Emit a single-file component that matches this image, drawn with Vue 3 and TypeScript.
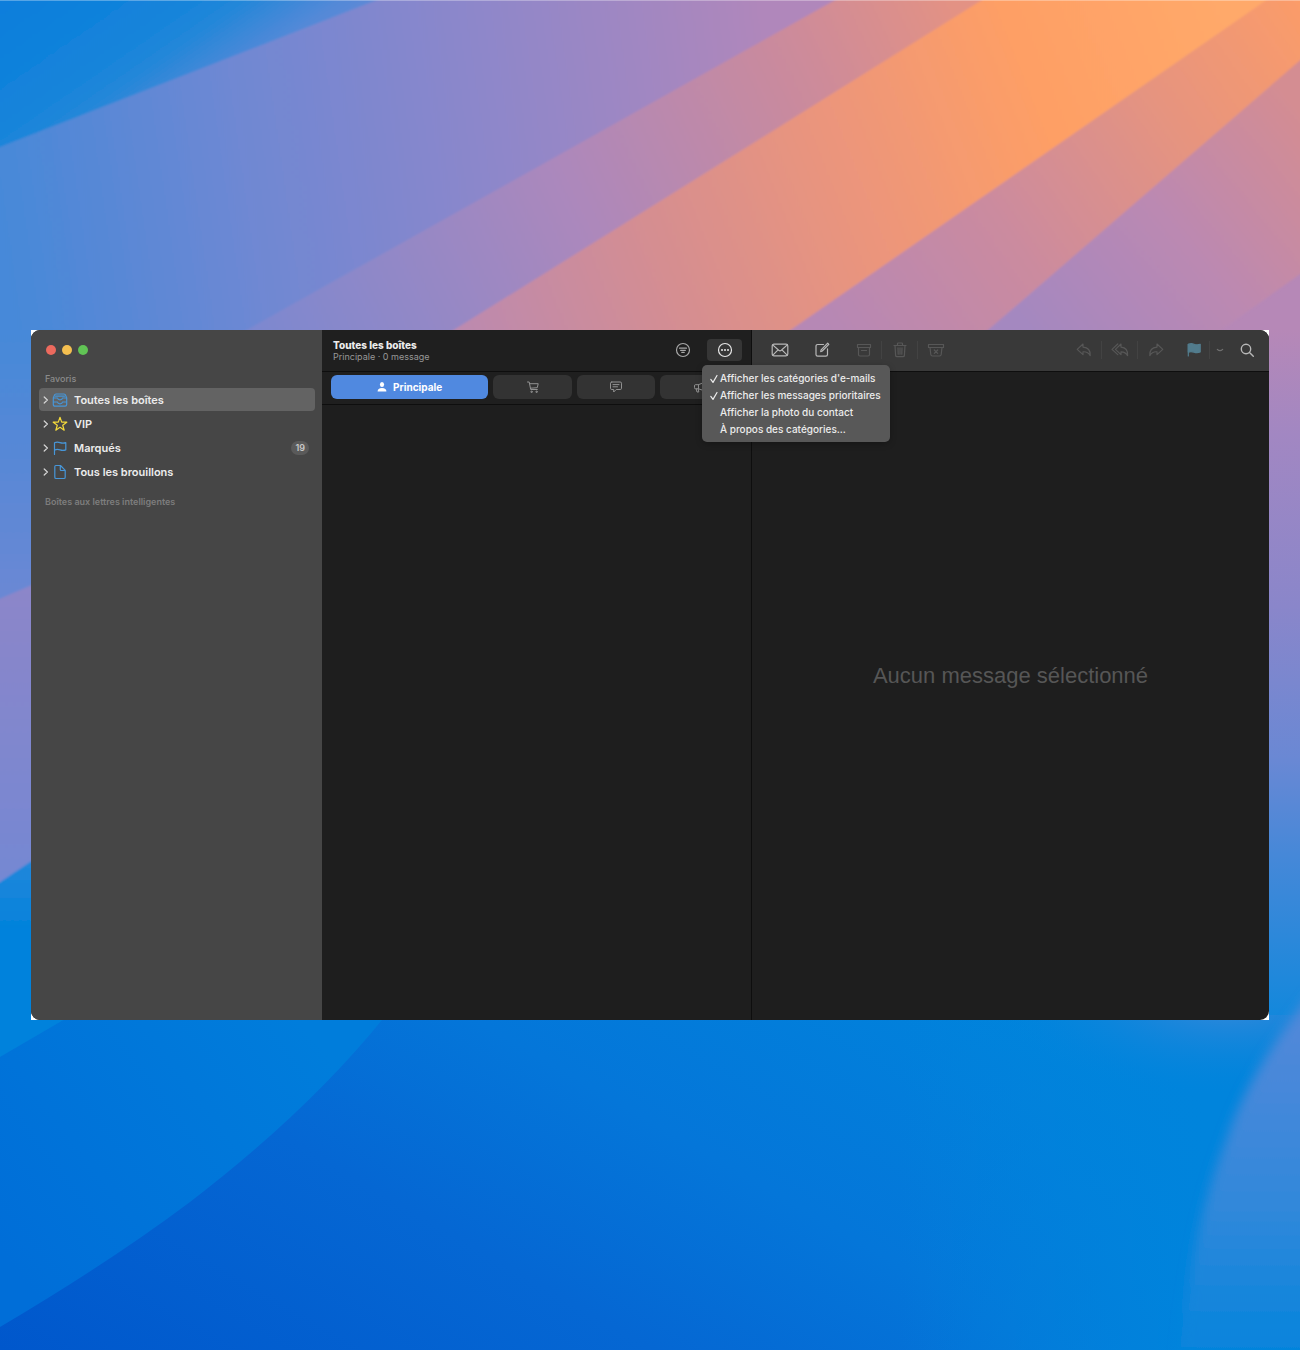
<script setup lang="ts">
import { ref } from 'vue'

interface Mailbox {
  label: string
  icon: 'tray' | 'star' | 'flag' | 'doc'
  count?: number
}

const mailboxes: Mailbox[] = [
  { label: 'Toutes les boîtes', icon: 'tray' },
  { label: 'VIP', icon: 'star' },
  { label: 'Marqués', icon: 'flag', count: 19 },
  { label: 'Tous les brouillons', icon: 'doc' },
]
const selected = ref('Toutes les boîtes')

const menuItems = ref([
  { label: "Afficher les catégories d'e-mails", checked: true },
  { label: 'Afficher les messages prioritaires', checked: true },
  { label: 'Afficher la photo du contact', checked: false },
  { label: 'À propos des catégories...', checked: false },
])
const menuOpen = ref(true)
</script>

<template>
  <div class="desktop">
    <svg class="wallpaper" viewBox="0 0 1300 1350" preserveAspectRatio="none" aria-hidden="true">
      <defs>
        <linearGradient id="base" gradientUnits="userSpaceOnUse" x1="0" y1="330" x2="0" y2="1020">
          <stop offset="0" stop-color="#b688b7" /><stop offset=".15" stop-color="#a287c2" />
          <stop offset=".4" stop-color="#8a86ca" /><stop offset=".62" stop-color="#6a88d4" />
          <stop offset=".76" stop-color="#4688d8" /><stop offset="1" stop-color="#1288dc" />
        </linearGradient>
        <linearGradient id="corner" gradientUnits="userSpaceOnUse" x1="0" y1="0" x2="122" y2="177">
          <stop offset="0" stop-color="#087edc" /><stop offset=".5" stop-color="#1684da" />
          <stop offset=".64" stop-color="#2287d9" /><stop offset=".88" stop-color="#5089d8" /><stop offset="1" stop-color="#6089d6" />
        </linearGradient>
        <linearGradient id="lav" gradientUnits="userSpaceOnUse" x1="0" y1="240" x2="780" y2="130">
          <stop offset="0" stop-color="#4689d9" /><stop offset=".32" stop-color="#6f88d3" />
          <stop offset=".62" stop-color="#8c87cb" /><stop offset="1" stop-color="#b087bb" />
        </linearGradient>
        <linearGradient id="pink" gradientUnits="userSpaceOnUse" x1="250" y1="330" x2="950" y2="0">
          <stop offset="0" stop-color="#7c88d0" /><stop offset=".45" stop-color="#ac88bc" />
          <stop offset=".8" stop-color="#cd8b9a" /><stop offset="1" stop-color="#e39284" />
        </linearGradient>
        <linearGradient id="orange" gradientUnits="userSpaceOnUse" x1="470" y1="330" x2="1230" y2="30">
          <stop offset="0" stop-color="#bd8aae" /><stop offset=".25" stop-color="#d58e91" />
          <stop offset=".52" stop-color="#ed967a" /><stop offset=".75" stop-color="#fe9f65" /><stop offset="1" stop-color="#ffa96a" />
        </linearGradient>
        <linearGradient id="coral" gradientUnits="userSpaceOnUse" x1="830" y1="330" x2="1300" y2="0">
          <stop offset="0" stop-color="#b688b5" /><stop offset=".35" stop-color="#cb8b9f" />
          <stop offset=".7" stop-color="#e6947f" /><stop offset="1" stop-color="#fb9c69" />
        </linearGradient>
        <linearGradient id="mauve" gradientUnits="userSpaceOnUse" x1="1030" y1="330" x2="1300" y2="110">
          <stop offset="0" stop-color="#a488c0" /><stop offset=".5" stop-color="#bb89b2" /><stop offset="1" stop-color="#d48d92" />
        </linearGradient>
        <linearGradient id="leftblue" gradientUnits="userSpaceOnUse" x1="0" y1="330" x2="0" y2="600">
          <stop offset="0" stop-color="#4689d9" /><stop offset="1" stop-color="#6b88d4" />
        </linearGradient>
        <linearGradient id="leftpurple" gradientUnits="userSpaceOnUse" x1="0" y1="590" x2="0" y2="880">
          <stop offset="0" stop-color="#8c86c9" /><stop offset="1" stop-color="#7588d3" />
        </linearGradient>
        <linearGradient id="leftdeep" gradientUnits="userSpaceOnUse" x1="0" y1="865" x2="0" y2="935">
          <stop offset="0" stop-color="#2187da" /><stop offset="1" stop-color="#0082dc" />
        </linearGradient>
        <linearGradient id="sea" gradientUnits="userSpaceOnUse" x1="50" y1="1380" x2="460" y2="670">
          <stop offset="0" stop-color="#0057cc" /><stop offset=".4" stop-color="#0567d3" />
          <stop offset=".64" stop-color="#0476d9" /><stop offset="1" stop-color="#0084dc" />
        </linearGradient>
        <linearGradient id="seaRight" gradientUnits="userSpaceOnUse" x1="900" y1="0" x2="1210" y2="0">
          <stop offset="0" stop-color="#0084dc" stop-opacity="0" /><stop offset="1" stop-color="#0084dc" />
        </linearGradient>
        <linearGradient id="shelf" gradientUnits="userSpaceOnUse" x1="0" y1="1250" x2="300" y2="1020">
          <stop offset="0" stop-color="#006ed8" /><stop offset="1" stop-color="#007ddb" />
        </linearGradient>
        <linearGradient id="ray" gradientUnits="userSpaceOnUse" x1="0" y1="1040" x2="0" y2="1350">
          <stop offset="0" stop-color="#4f88d9" /><stop offset=".55" stop-color="#3088da" /><stop offset="1" stop-color="#0684dc" />
        </linearGradient>
        <radialGradient id="glow" gradientUnits="userSpaceOnUse" cx="1230" cy="1000" r="240" gradientTransform="matrix(1 0 0 .4 0 600)">
          <stop offset="0" stop-color="#3a89da" /><stop offset="1" stop-color="#0084dc" stop-opacity="0" />
        </radialGradient>
        <filter id="soft" x="-20%" y="-20%" width="140%" height="140%"><feGaussianBlur stdDeviation="6" /></filter>
        <filter id="edge"><feGaussianBlur stdDeviation="1" /></filter>
      </defs>
      <rect width="1300" height="1350" fill="url(#base)" />
      <g filter="url(#edge)">
        <path d="M-10-10H860L230 340H-10z" fill="url(#lav)" />
        <path d="M-10-10H400L377 0 0 147-10 151z" fill="url(#corner)" />
        <path d="M853-10H1000L430 345H220z" fill="url(#pink)" />
        <path d="M998-10H1282L770 345H430z" fill="url(#orange)" />
        <path d="M1281-10H1320V48L970 345H769z" fill="url(#coral)" />
        <path d="M-10 330H60V574L-10 604z" fill="url(#leftblue)" />
        <path d="M-10 603L60 573V842L-10 889z" fill="url(#leftpurple)" />
        <path d="M-10 889L60 842V1050H-10z" fill="url(#leftdeep)" />
        <path d="M1320 43V260L1200 345H971z" fill="url(#mauve)" />
      </g>
      <path d="M0 1015H1300V1350H0z" fill="url(#sea)" />
      <path d="M600 1015H1300V1350H600z" fill="url(#seaRight)" />
      <path d="M900 1015H1300V1100H900z" fill="url(#glow)" />
      <path d="M0 1015H386Q310 1110 190 1202Q110 1262 0 1327z" fill="url(#shelf)" />
      <path d="M0 1015H72L0 1057z" fill="#0082dc" />
      <path d="M1330 970Q1250 1065 1226 1140Q1190 1230 1178 1370H1330z" fill="url(#ray)" filter="url(#soft)" />
      <path d="M0 0H1300V1H0z" fill="#fff" opacity=".3" />
    </svg>

    <div class="frame">
      <main class="window">
        <aside class="sidebar">
          <div class="lights">
            <button class="light red" aria-label="Fermer"></button>
            <button class="light yellow" aria-label="Réduire"></button>
            <button class="light green" aria-label="Agrandir"></button>
          </div>
          <h2 class="section">Favoris</h2>
          <nav class="boxes">
            <button
              v-for="box in mailboxes"
              :key="box.label"
              class="box"
              :class="{ active: box.label === selected }"
              @click="selected = box.label"
            >
              <svg class="chev" viewBox="0 0 6 8"><path d="M1.2 1l3.2 3-3.2 3" /></svg>
              <svg class="boxicon" :class="box.icon" viewBox="0 0 16 16">
                <g v-if="box.icon === 'tray'">
                  <path d="M1.300 6L2.400 3.200Q2.800 2 4 2h8q1.200 0 1.600 1.200L14.700 6v6.500q0 1.700-1.700 1.700H3q-1.700 0-1.700-1.700z" />
                  <path d="M1.500 6h4q.3 1.800 2.500 1.800T10.500 6h4M1.500 10h4q.3 1.800 2.500 1.800t2.500-1.800h4M3.500 4.100h9" />
                </g>
                <path v-else-if="box.icon === 'star'" d="M8 1.300l1.700 4.800 5.100.1-4.100 3.100 1.500 4.900L8 11.300l-4.200 2.900 1.500-4.900-4.100-3.100 5.100-.1z" />
                <path v-else-if="box.icon === 'flag'" d="M2.500 14.500V2.800Q5 1.600 8 2.600t5.800 0v7.300q-2.800 1-5.800 0t-5.500.3" />
                <path v-else d="M3.800 1.500h4.700l4.700 4.800v6.900q0 1.300-1.300 1.300H4.100q-1.300 0-1.300-1.300V2.800q0-1.300 1-1.300zM8.300 1.700v3.700q0 1.100 1.100 1.100h3.700" />
              </svg>
              <span class="boxname">{{ box.label }}</span>
              <span v-if="box.count" class="badge">{{ box.count }}</span>
            </button>
          </nav>
          <h2 class="section smart">Boîtes aux lettres intelligentes</h2>
        </aside>

        <section class="list">
          <header class="bar">
            <div class="heading">
              <h1>Toutes les boîtes</h1>
              <p>Principale · 0 message</p>
            </div>
            <button class="tool" aria-label="Filtrer">
              <svg viewBox="0 0 16 16"><circle cx="8" cy="8" r="6.500" /><path d="M4.500 6.200h7M5.600 8.300h4.800M6.800 10.400h2.400" /></svg>
            </button>
            <div class="more">
              <button class="tool pressed" aria-label="Options" :aria-expanded="menuOpen" @click="menuOpen = !menuOpen">
                <svg viewBox="0 0 16 16"><circle cx="8" cy="8" r="6.500" /><path class="dots" d="M5 8h.01M8 8h.01M11 8h.01" /></svg>
              </button>
              <div v-if="menuOpen" class="menu" role="menu">
                <button v-for="item in menuItems" :key="item.label" class="item" role="menuitem" @click="item.checked = !item.checked">
                  <svg class="check" viewBox="0 0 10 10"><path v-if="item.checked" d="M1.800 5.400l2.200 3L8 1.500" /></svg>
                  <span>{{ item.label }}</span>
                </button>
              </div>
            </div>
          </header>
          <div class="tabs">
            <button class="tab main">
              <svg class="person" viewBox="0 0 10 10"><ellipse cx="5" cy="2.600" rx="2.100" ry="2.500" /><path d="M.6 9.500q0-3.500 4.400-3.500t4.400 3.500z" /></svg>
              <span>Principale</span>
            </button>
            <button class="tab" aria-label="Transactions">
              <svg viewBox="0 0 14 14"><path d="M1.500 2h1.700l1.500 7.500h6.600M3.500 3.700h8.700l-.9 4-6.800.5" /><circle cx="5.500" cy="11.800" r=".7" /><circle cx="10.500" cy="11.800" r=".7" /></svg>
            </button>
            <button class="tab" aria-label="Actualités">
              <svg viewBox="0 0 14 14"><path d="M2.800 2h8.400q1.300 0 1.300 1.200v5.100q0 1.200-1.300 1.200H7.200L4.700 12V9.500H2.800q-1.300 0-1.300-1.200V3.200Q1.500 2 2.800 2zM4 4.600h6M4 6.800h4.500" /></svg>
            </button>
            <button class="tab" aria-label="Promotions">
              <svg viewBox="0 0 14 14"><path d="M1.500 5.500q0-.8.8-.8h3.200L12 2v9L5.500 8.800H2.300q-.8 0-.8-.8zM5.500 4.700v4.100M3.200 8.800l.8 3.200h1.800L5.200 8.800" /></svg>
            </button>
          </div>
        </section>

        <section class="viewer">
          <header class="actions">
            <button class="act" aria-label="Relever">
              <svg class="wide" viewBox="0 0 18 16"><rect x="1.200" y="2.200" width="15.600" height="11.600" rx="1.800" /><path d="M1.700 2.900l6 5.400q1.300 1.100 2.600 0l6-5.400M1.800 13.200l5-5M16.200 13.200l-5-5" /></svg>
            </button>
            <button class="act gap" aria-label="Nouveau message">
              <svg viewBox="0 0 16 16"><path d="M9.500 2.500H3.700q-1.700 0-1.700 1.700v8.300q0 1.700 1.700 1.700h8.100q1.700 0 1.700-1.700V6.800M6.700 9.600l.4-1.700 6.600-6.700 1.100 1.200-6.500 6.600z" /></svg>
            </button>
            <button class="act gap dim" aria-label="Archiver">
              <svg viewBox="0 0 16 16"><path d="M1.500 2.500h13v3h-13zM2.500 5.500v7q0 1.500 1.500 1.500h8q1.500 0 1.500-1.500v-7M5.500 8.500h5" /></svg>
            </button>
            <i class="sep"></i>
            <button class="act dim" aria-label="Supprimer">
              <svg viewBox="0 0 16 16"><path d="M2 3.500h12M5.500 3.300V1.800q0-.8.8-.8h3.400q.8 0 .8.800v1.500M3 3.500l.6 9.900q.1 1.300 1.400 1.300h6q1.300 0 1.400-1.300L13 3.500M6 5.800l.2 6.400M8 5.800v6.400M10 5.800l-.2 6.400" /></svg>
            </button>
            <i class="sep"></i>
            <button class="act dim" aria-label="Indésirable">
              <svg class="wide" viewBox="0 0 18 16"><path d="M1.500 2.500h15v3h-15zM3 5.500l.8 7q.2 1.500 1.700 1.500h7q1.500 0 1.700-1.500l.8-7M7.300 8l3.400 3.400M10.700 8l-3.400 3.400" /></svg>
            </button>
            <span class="spacer"></span>
            <button class="act dim" aria-label="Répondre">
              <svg viewBox="0 0 16 16"><path d="M7 2L1.200 7.400 7 12.600V9.800q4.800-.4 7.200 3.800.5-8-7.200-8.500z" /></svg>
            </button>
            <i class="sep"></i>
            <button class="act dim" aria-label="Répondre à tous">
              <svg class="wide" viewBox="0 0 18 16"><path d="M10 2L4.400 7.400 10 12.600V9.800q4.300-.2 6.600 3.800.5-8-6.600-8.500zM6.800 2L1 7.400l5.800 5.200" /></svg>
            </button>
            <i class="sep"></i>
            <button class="act dim" aria-label="Réexpédier">
              <svg viewBox="0 0 16 16"><path d="M9 2l5.800 5.400L9 12.600V9.800q-4.800-.4-7.200 3.800Q1.300 5.600 9 5.100z" /></svg>
            </button>
            <button class="act flagbtn" aria-label="Marquer">
              <svg viewBox="0 0 16 16"><path class="cloth" d="M2.300 10.100V2.400Q5 1 8 2.200t6.200.1v7.600q-3 1.300-6.200.2t-5.700 0z" /><path d="M2.300 14V2.400" /></svg>
            </button>
            <i class="sep"></i>
            <button class="act choose" aria-label="Choisir une couleur">
              <svg viewBox="0 0 16 16"><path d="M5.300 7.300Q8 10 10.700 7.300" /></svg>
            </button>
            <button class="act search" aria-label="Rechercher">
              <svg viewBox="0 0 16 16"><circle cx="7" cy="7" r="4.700" /><path d="M10.500 10.500l3.800 3.800" /></svg>
            </button>
          </header>
          <div class="empty"><p>Aucun message sélectionné</p></div>
        </section>
      </main>
    </div>
  </div>
</template>

<style>
body {
  margin: 0;
}
</style>

<style scoped>
.desktop {
  position: relative;
  box-sizing: border-box;
  min-height: 100vh;
  padding: 31px;
  display: flex;
  align-items: center;
  overflow: hidden;
  font-family: Inter, "Liberation Sans", sans-serif;
  color: #ececec;
}
.wallpaper {
  position: absolute;
  inset: 0;
  width: 100%;
  height: 100%;
}
.frame {
  position: relative;
  flex: 1;
  min-width: 0;
  background: #fff;
}
.window {
  display: flex;
  aspect-ratio: 1238 / 690;
  border-radius: 9px;
  overflow: hidden;
  background: #1e1e1e;
}
button {
  margin: 0;
  padding: 0;
  border: 0;
  background: none;
  font: inherit;
  color: inherit;
}
svg {
  display: block;
  fill: none;
  stroke: currentColor;
  stroke-width: 1.2;
  stroke-linecap: round;
  stroke-linejoin: round;
}
.wallpaper,
.wallpaper * {
  stroke: none;
}
h1,
h2,
p {
  margin: 0;
}

.sidebar {
  flex: none;
  width: 291px;
  box-sizing: border-box;
  padding: 15px 7px 0 8px;
  background: #464646;
}
.lights {
  display: flex;
  gap: 6px;
  padding-left: 7px;
}
.light {
  width: 10px;
  height: 10px;
  border-radius: 50%;
}
.red {
  background: #ec6a5e;
}
.yellow {
  background: #f4bf50;
}
.green {
  background: #61c455;
}
.section {
  margin-top: 18px;
  padding-left: 6px;
  font-size: 9px;
  line-height: 12px;
  font-weight: 500;
  color: #8b8b8b;
}
.section.smart {
  margin-top: 13px;
  font-weight: 600;
  color: #7d7d7d;
}
.boxes {
  display: flex;
  flex-direction: column;
  gap: 1px;
  margin-top: 3px;
}
.box {
  display: flex;
  align-items: center;
  height: 23px;
  padding: 0 6px 0 4px;
  border-radius: 4px;
  text-align: left;
}
.box.active {
  background: #636363;
}
.chev {
  width: 6px;
  height: 8px;
  color: #d5d5d5;
}
.boxicon {
  width: 16px;
  height: 16px;
  margin: 0 6px 0 3px;
  color: #4796d8;
}
.boxicon.star {
  color: #f2d83b;
}
.boxname {
  flex: 1;
  font-size: 11px;
  line-height: 14px;
  font-weight: 600;
}
.badge {
  padding: 0 4px;
  border-radius: 7px;
  background: #5a5a5a;
  font-size: 9px;
  line-height: 14px;
  font-weight: 600;
  color: #c8c8c8;
}

.list {
  flex: none;
  width: 430px;
  box-sizing: border-box;
  border-right: 1px solid #0e0e0e;
}
.bar,
.actions {
  display: flex;
  align-items: center;
  box-sizing: border-box;
  height: 42px;
  padding: 0 9px 1px 11px;
  border-bottom: 1px solid #0e0e0e;
  background: #1f1f1f;
}
.heading {
  flex: 1;
}
h1 {
  font-size: 10px;
  line-height: 12px;
  font-weight: 800;
}
.heading p {
  font-size: 9px;
  line-height: 11px;
  color: #979797;
}
.tool {
  display: flex;
  align-items: center;
  justify-content: center;
  width: 35px;
  height: 22px;
  border-radius: 4px;
  color: #a8a8a8;
}
.tool svg,
.act svg {
  width: 16px;
  height: 16px;
}
.tool.pressed {
  background: #363636;
  color: #e6e6e6;
}
.dots {
  stroke-width: 2;
}
.more {
  position: relative;
  margin-left: 7px;
}
.menu {
  position: absolute;
  z-index: 2;
  top: 26px;
  left: -5px;
  box-sizing: border-box;
  width: 188px;
  padding: 5px 0 4px 7px;
  border-radius: 5px;
  background: #585858;
  box-shadow: 0 2px 6px rgba(0, 0, 0, 0.25);
}
.item {
  display: flex;
  align-items: center;
  gap: 1px;
  width: 100%;
  font-size: 10px;
  line-height: 17px;
  font-weight: 500;
  text-align: left;
  white-space: nowrap;
}
.check {
  width: 10px;
  height: 10px;
}
.tabs {
  display: flex;
  gap: 5px;
  padding: 3px 12px 5px 9px;
  border-bottom: 1px solid #0e0e0e;
  background: #1f1f1f;
}
.tab {
  display: flex;
  align-items: center;
  justify-content: center;
  gap: 6px;
  flex: 1;
  height: 24px;
  border-radius: 6px;
  background: #333;
  color: #929292;
  font-size: 10px;
  font-weight: 700;
}
.tab.main {
  flex: 2;
  background: #5089e0;
  color: #fff;
}
.tab svg {
  width: 14px;
  height: 14px;
  stroke-width: 1;
}
.tab .person {
  width: 10px;
  height: 10px;
  fill: currentColor;
  stroke: none;
}

.viewer {
  flex: 1;
  min-width: 0;
  display: flex;
  flex-direction: column;
}
.actions {
  padding: 0 5px 1px 10px;
  background: #393939;
}
.act {
  display: flex;
  align-items: center;
  justify-content: center;
  width: 35px;
  height: 22px;
  color: #b8b8b8;
}
.act.gap {
  margin-left: 7px;
}
.act svg.wide {
  width: 18px;
}
.act.dim {
  color: #575757;
}
.sep {
  width: 1px;
  height: 18px;
  background: #434343;
}
.spacer {
  flex: 1;
}
.act.flagbtn {
  width: 30px;
  margin-left: 6px;
  color: #527c8d;
}
.cloth {
  fill: currentColor;
}
.act.choose {
  width: 19px;
  color: #6f6f6f;
}
.act.search svg {
  stroke-width: 1.4;
}
.empty {
  flex: 1;
  display: flex;
  align-items: center;
  justify-content: center;
  padding-bottom: 40px;
  font-family: "Liberation Sans", sans-serif;
  font-size: 22px;
  color: #565656;
}
</style>
